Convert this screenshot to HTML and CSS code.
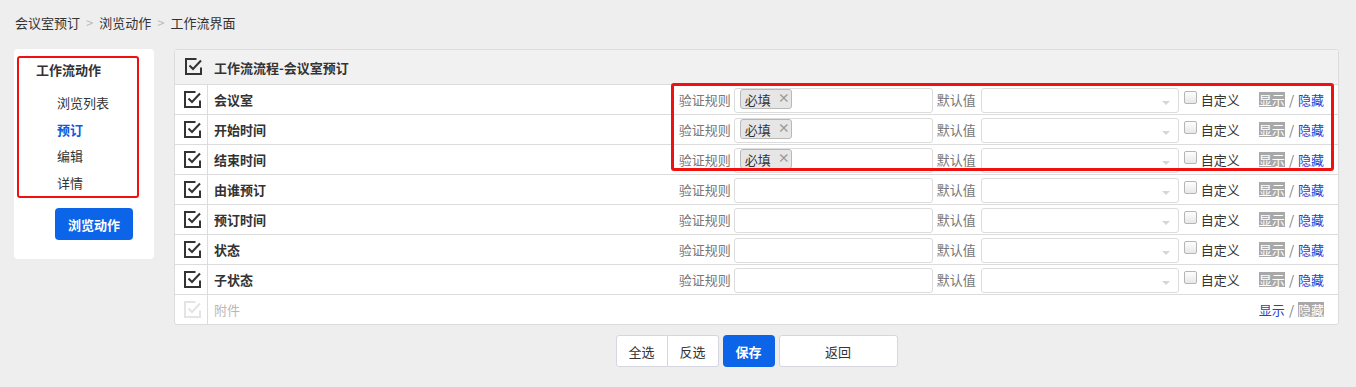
FILE: index.html
```html
<!DOCTYPE html>
<html lang="zh">
<head>
<meta charset="utf-8">
<title>工作流界面</title>
<link rel="stylesheet" href="styles.css">
</head>
<body>
<div class="crumbs">
  <span>会议室预订</span><span class="sep">&gt;</span><span>浏览动作</span><span class="sep">&gt;</span><span>工作流界面</span>
</div>
<div class="layout">
  <aside class="side">
    <div class="side-box">
      <div class="side-title">工作流动作</div>
      <ul class="side-list">
        <li>浏览列表</li>
        <li class="active">预订</li>
        <li>编辑</li>
        <li>详情</li>
      </ul>
    </div>
    <button class="btn-primary side-btn">浏览动作</button>
  </aside>
  <main class="main">
    <div class="panel">
      <div class="row head">
        <div class="cell-check"><svg class="chk" viewBox="0 0 17 17"><path d="M11.5 1H1V16H16V9.5"/><path d="M4.5 7.5L8 11L16 2.5"/></svg></div>
        <div class="name">工作流流程-会议室预订</div>
      </div>

      <div class="row">
        <div class="cell-check line"><svg class="chk" viewBox="0 0 17 17"><path d="M11.5 1H1V16H16V9.5"/><path d="M4.5 7.5L8 11L16 2.5"/></svg></div>
        <div class="name">会议室</div>
        <div class="ctrls">
          <span class="lbl lbl-rule">验证规则</span>
          <div class="input"><span class="tag">必填<i>×</i></span></div>
          <span class="lbl lbl-def">默认值</span>
          <div class="select"><span class="caret"></span></div>
          <input type="checkbox" class="cb">
          <span class="custom">自定义</span>
          <span class="vis"><b class="on">显示</b><span class="slash">/</span><a>隐藏</a></span>
        </div>
      </div>

      <div class="row">
        <div class="cell-check line"><svg class="chk" viewBox="0 0 17 17"><path d="M11.5 1H1V16H16V9.5"/><path d="M4.5 7.5L8 11L16 2.5"/></svg></div>
        <div class="name">开始时间</div>
        <div class="ctrls">
          <span class="lbl lbl-rule">验证规则</span>
          <div class="input"><span class="tag">必填<i>×</i></span></div>
          <span class="lbl lbl-def">默认值</span>
          <div class="select"><span class="caret"></span></div>
          <input type="checkbox" class="cb">
          <span class="custom">自定义</span>
          <span class="vis"><b class="on">显示</b><span class="slash">/</span><a>隐藏</a></span>
        </div>
      </div>

      <div class="row">
        <div class="cell-check line"><svg class="chk" viewBox="0 0 17 17"><path d="M11.5 1H1V16H16V9.5"/><path d="M4.5 7.5L8 11L16 2.5"/></svg></div>
        <div class="name">结束时间</div>
        <div class="ctrls">
          <span class="lbl lbl-rule">验证规则</span>
          <div class="input"><span class="tag">必填<i>×</i></span></div>
          <span class="lbl lbl-def">默认值</span>
          <div class="select"><span class="caret"></span></div>
          <input type="checkbox" class="cb">
          <span class="custom">自定义</span>
          <span class="vis"><b class="on">显示</b><span class="slash">/</span><a>隐藏</a></span>
        </div>
      </div>

      <div class="row">
        <div class="cell-check line"><svg class="chk" viewBox="0 0 17 17"><path d="M11.5 1H1V16H16V9.5"/><path d="M4.5 7.5L8 11L16 2.5"/></svg></div>
        <div class="name">由谁预订</div>
        <div class="ctrls">
          <span class="lbl lbl-rule">验证规则</span>
          <div class="input"></div>
          <span class="lbl lbl-def">默认值</span>
          <div class="select"><span class="caret"></span></div>
          <input type="checkbox" class="cb">
          <span class="custom">自定义</span>
          <span class="vis"><b class="on">显示</b><span class="slash">/</span><a>隐藏</a></span>
        </div>
      </div>

      <div class="row">
        <div class="cell-check line"><svg class="chk" viewBox="0 0 17 17"><path d="M11.5 1H1V16H16V9.5"/><path d="M4.5 7.5L8 11L16 2.5"/></svg></div>
        <div class="name">预订时间</div>
        <div class="ctrls">
          <span class="lbl lbl-rule">验证规则</span>
          <div class="input"></div>
          <span class="lbl lbl-def">默认值</span>
          <div class="select"><span class="caret"></span></div>
          <input type="checkbox" class="cb">
          <span class="custom">自定义</span>
          <span class="vis"><b class="on">显示</b><span class="slash">/</span><a>隐藏</a></span>
        </div>
      </div>

      <div class="row">
        <div class="cell-check line"><svg class="chk" viewBox="0 0 17 17"><path d="M11.5 1H1V16H16V9.5"/><path d="M4.5 7.5L8 11L16 2.5"/></svg></div>
        <div class="name">状态</div>
        <div class="ctrls">
          <span class="lbl lbl-rule">验证规则</span>
          <div class="input"></div>
          <span class="lbl lbl-def">默认值</span>
          <div class="select"><span class="caret"></span></div>
          <input type="checkbox" class="cb">
          <span class="custom">自定义</span>
          <span class="vis"><b class="on">显示</b><span class="slash">/</span><a>隐藏</a></span>
        </div>
      </div>

      <div class="row">
        <div class="cell-check line"><svg class="chk" viewBox="0 0 17 17"><path d="M11.5 1H1V16H16V9.5"/><path d="M4.5 7.5L8 11L16 2.5"/></svg></div>
        <div class="name">子状态</div>
        <div class="ctrls">
          <span class="lbl lbl-rule">验证规则</span>
          <div class="input"></div>
          <span class="lbl lbl-def">默认值</span>
          <div class="select"><span class="caret"></span></div>
          <input type="checkbox" class="cb">
          <span class="custom">自定义</span>
          <span class="vis"><b class="on">显示</b><span class="slash">/</span><a>隐藏</a></span>
        </div>
      </div>

      <div class="row disabled">
        <div class="cell-check line"><svg class="chk" viewBox="0 0 17 17"><path d="M11.5 1H1V16H16V9.5"/><path d="M4.5 7.5L8 11L16 2.5"/></svg></div>
        <div class="name">附件</div>
        <div class="ctrls">
          <span class="vis"><a>显示</a><span class="slash">/</span><b class="on">隐藏</b></span>
        </div>
      </div>

      <div class="mark"></div>
    </div>
    <div class="actions">
      <div class="btn-group">
        <button class="btn">全选</button><button class="btn">反选</button>
      </div>
      <button class="btn-primary save">保存</button>
      <button class="btn back">返回</button>
    </div>
  </main>
</div>
</body>
</html>
```

FILE: styles.css
```css
* { box-sizing: border-box; }
html, body { margin: 0; padding: 0; }
body {
  background: #eeeeee;
  font-family: "Noto Sans CJK SC", "Liberation Sans", sans-serif;
  font-size: 13px;
  color: #333;
  width: 1356px;
  height: 387px;
  overflow: hidden;
}

.crumbs {
  padding: 14px 0 0 15px;
  height: 49px;
  line-height: 18px;
  color: #333;
}
.crumbs .sep { color: #bbb; margin: 0 6px; }

.layout {
  display: flex;
  align-items: flex-start;
  padding-left: 14px;
  gap: 20px;
}

/* side card */
.side {
  width: 140px;
  height: 210px;
  background: #fff;
  border-radius: 4px;
  padding: 7px 0 0 3px;
}
.side-box {
  width: 122px;
  height: 142px;
  border: 2px solid #f01010;
  border-radius: 3px;
  padding: 2px 0 0 17px;
}
.side-title {
  font-weight: bold;
  line-height: 20px;
  color: #333;
}
.side-list {
  list-style: none;
  margin: 10px 0 0 0;
  padding: 0 0 0 21px;
}
.side-list li {
  line-height: 26.5px;
  color: #333;
}
.side-list li.active { color: #1158e0; font-weight: bold; }

.btn-primary {
  border: 0;
  background: #0c64e8;
  color: #fff;
  font-family: inherit;
  font-size: 13px;
  font-weight: bold;
  border-radius: 4px;
  padding: 0;
  cursor: pointer;
}
.side-btn {
  display: block;
  margin: 10px 0 0 38px;
  width: 78px;
  height: 32px;
}

/* main panel */
.main { width: 1165px; }
.panel {
  position: relative;
  background: #fff;
  border: 1px solid #dcdcdc;
  border-radius: 3px;
}
.row {
  display: flex;
  align-items: center;
  height: 30px;
  border-top: 1px solid #dcdcdc;
}
.row.head {
  height: 34px;
  border-top: 0;
  background: #f1f1f1;
  border-radius: 3px 3px 0 0;
}
.cell-check {
  width: 33px;
  height: 100%;
  display: flex;
  align-items: center;
  justify-content: center;
  padding-left: 3px;
}
.cell-check.line { border-right: 1px solid #dcdcdc; }
.chk {
  width: 17px;
  height: 17px;
  fill: none;
  stroke: #333;
  stroke-width: 2;
}
.row.head .chk { margin-top: -1px; }
.name {
  flex: 1;
  padding-left: 6px;
  font-weight: bold;
  color: #333;
}

.ctrls {
  display: flex;
  align-items: center;
  padding-right: 14px;
}
.lbl { color: #777; }
.lbl-rule { margin-right: 3px; }
.input {
  width: 199px;
  height: 25px;
  border: 1px solid #dcdcdc;
  border-radius: 3px;
  padding: 0 0 0 5px;
  display: flex;
  align-items: center;
  margin-top: 1px;
}
.tag {
  display: inline-flex;
  align-items: center;
  height: 20px;
  width: 52px;
  padding: 0 0 0 4px;
  background: #e6e6e6;
  border: 1px solid #b8b8b8;
  border-radius: 3px;
  color: #333;
  margin-top: -2px;
}
.tag i {
  font-style: normal;
  color: #999;
  font-weight: bold;
  margin-left: 7px;
  font-size: 12px;
  margin-top: -4px;
}
.lbl-def { margin: 0 5px 0 4px; }
.select {
  width: 198px;
  height: 25px;
  border: 1px solid #dcdcdc;
  border-radius: 3px;
  position: relative;
  margin-top: 1px;
}
.caret {
  position: absolute;
  right: 8px;
  top: 12px;
  width: 0;
  height: 0;
  border-left: 4px solid transparent;
  border-right: 4px solid transparent;
  border-top: 4px solid #d6d6d6;
}
.cb {
  width: 13px;
  height: 13px;
  margin: -4px 4px 0 5px;
  appearance: none;
  -webkit-appearance: none;
  border: 1px solid #b5b5b5;
  border-radius: 2px;
  background: linear-gradient(#fdfdfd, #e8e8e8);
}
.custom { color: #333; width: 58px; }
.vis { display: inline-flex; align-items: center; }
.vis b.on {
  font-weight: normal;
  background: #a8a8a8;
  color: #fff;
  line-height: 15px;
}
.vis a { color: #2a3fd0; }
.slash { color: #777; margin: 0 4px; }

.row.disabled .chk { stroke: #e4e4e4; }
.row.disabled .name { color: #b8b8b8; font-weight: normal; }

.mark {
  position: absolute;
  left: 496px;
  top: 33px;
  width: 663px;
  height: 88px;
  border: 3px solid #f01010;
  border-radius: 3px;
  pointer-events: none;
}

.actions {
  display: flex;
  justify-content: center;
  align-items: center;
  margin-top: 10px;
  gap: 4px;
}
.btn-group { display: flex; }
.btn {
  background: #fff;
  border: 1px solid #d6d6e0;
  border-radius: 3px;
  height: 32px;
  font-family: inherit;
  font-size: 13px;
  color: #333;
  padding: 0;
}
.btn-group .btn { width: 52px; }
.btn-group .btn:first-child { border-radius: 3px 0 0 3px; }
.btn-group .btn:last-child { border-radius: 0 3px 3px 0; border-left: 0; width: 51px; }
.save { width: 52px; height: 32px; }
.back { width: 119px; }
```
